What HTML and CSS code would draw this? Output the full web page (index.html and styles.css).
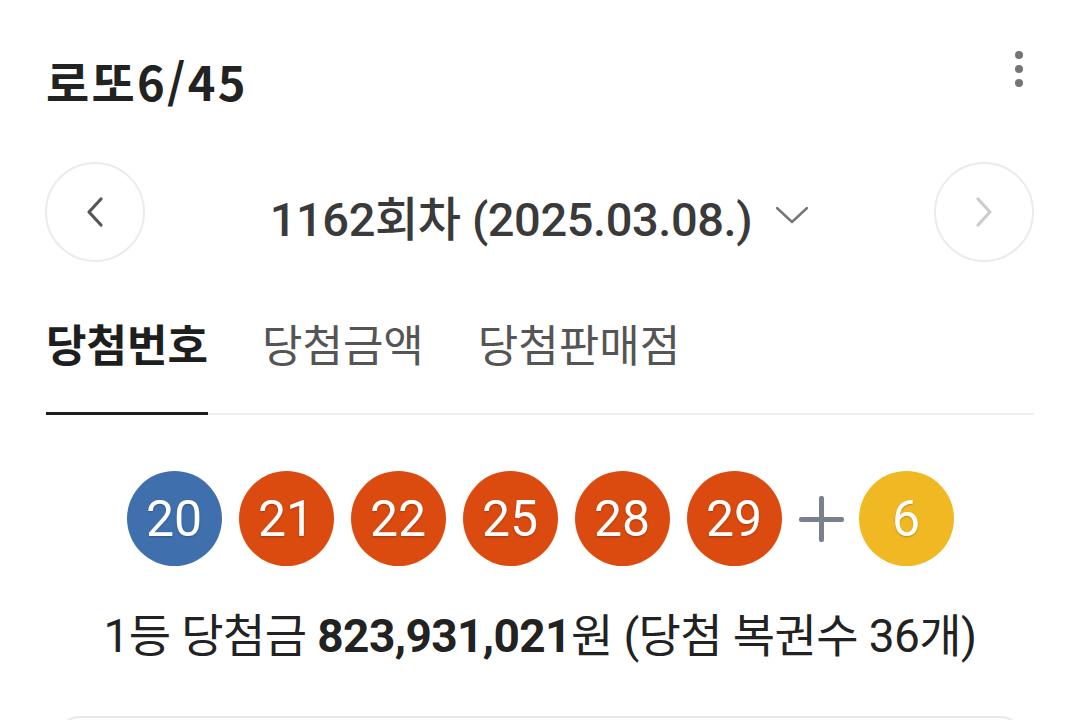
FILE: index.html
```html
<!DOCTYPE html>
<html lang="ko">
<head>
<meta charset="utf-8">
<link rel="stylesheet" href="styles.css">
</head>
<body>
<div class="page">
  <header class="header">
    <h1 class="title">로또6/45</h1>
    <button class="more" aria-label="더보기">
      <span class="dot"></span><span class="dot"></span><span class="dot"></span>
    </button>
  </header>

  <div class="nav">
    <button class="circle prev" aria-label="이전">
      <svg width="20" height="34" viewBox="0 0 20 34"><path d="M16 4 L4 17 L16 30" fill="none" stroke="#555" stroke-width="3.2" stroke-linecap="round" stroke-linejoin="round"/></svg>
    </button>
    <div class="round">
      <span class="round-text">1162회차 (2025.03.08.)</span>
      <svg class="caret" width="34" height="20" viewBox="0 0 34 20"><path d="M2 3 L17 17 L32 3" fill="none" stroke="#777" stroke-width="2.4" stroke-linecap="round" stroke-linejoin="round"/></svg>
    </div>
    <button class="circle next" aria-label="다음">
      <svg width="20" height="34" viewBox="0 0 20 34"><path d="M4 4 L16 17 L4 30" fill="none" stroke="#ccc" stroke-width="3.2" stroke-linecap="round" stroke-linejoin="round"/></svg>
    </button>
  </div>

  <nav class="tabs">
    <a class="tab active">당첨번호</a>
    <a class="tab">당첨금액</a>
    <a class="tab">당첨판매점</a>
  </nav>

  <div class="balls">
    <span class="ball blue">20</span>
    <span class="ball red">21</span>
    <span class="ball red">22</span>
    <span class="ball red">25</span>
    <span class="ball red">28</span>
    <span class="ball red">29</span>
    <span class="plus"></span>
    <span class="ball yellow">6</span>
  </div>

  <p class="prize">1등 당첨금 <b>823,931,021</b>원 (당첨 복권수 36개)</p>

  <div class="box"></div>
</div>
</body>
</html>
```

FILE: styles.css
```css
html, body {
  margin: 0;
  padding: 0;
  background: #fff;
  overflow: hidden;
}
body {
  font-family: "Roboto", "Noto Sans CJK KR", sans-serif;
  color: #222;
}
.page {
  padding: 0 46px;
  height: 720px;
  box-sizing: border-box;
  overflow: hidden;
}
.header {
  display: flex;
  align-items: center;
  justify-content: space-between;
  height: 60px;
  padding-top: 51px;
}
.title {
  margin: 0;
  font-family: "Noto Sans CJK KR", sans-serif;
  font-size: 47px;
  font-weight: 700;
  color: #222;
  letter-spacing: 2.3px;
  line-height: 60px;
}
.more {
  border: 0;
  background: none;
  padding: 0;
  display: flex;
  flex-direction: column;
  gap: 6px;
  margin-right: 11px;
  margin-top: -24px;
  width: 8px;
}
.dot {
  width: 8px;
  height: 8px;
  border-radius: 50%;
  background: #757575;
}
.nav {
  display: flex;
  align-items: center;
  margin-top: 51px;
  margin-left: -1px;
}
.circle {
  flex: none;
  width: 100px;
  height: 100px;
  border-radius: 50%;
  border: 2px solid #ebebeb;
  background: #fff;
  display: flex;
  align-items: center;
  justify-content: center;
  padding: 0;
}
.round {
  flex: 1;
  display: flex;
  align-items: center;
  justify-content: center;
  gap: 23px;
  padding-top: 6px;
}
.round-text {
  font-family: "Roboto", "Noto Sans CJK KR", sans-serif;
  font-size: 47px;
  font-weight: 500;
  color: #3a3a3a;
  letter-spacing: -0.4px;
}
.tabs {
  display: flex;
  gap: 54px;
  margin-top: 53px;
  border-bottom: 2px solid #eeeeee;
}
.tab {
  font-family: "Noto Sans CJK KR", sans-serif;
  font-size: 44px;
  line-height: 56px;
  color: #555;
  padding-bottom: 41px;
  margin-bottom: -2px;
  border-bottom: 3px solid transparent;
}
.tab.active {
  color: #1e1e1e;
  font-weight: 700;
  border-bottom-color: #1e1e1e;
}
.balls {
  display: flex;
  justify-content: center;
  align-items: center;
  gap: 17px;
  margin-top: 56px;
}
.ball {
  width: 95px;
  height: 95px;
  border-radius: 50%;
  display: flex;
  align-items: center;
  justify-content: center;
  color: #fff;
  font-family: "Roboto", sans-serif;
  font-size: 50px;
  text-shadow: 0 1px 2px rgba(0,0,0,0.25);
}
.blue { background: #3f70ad; }
.red { background: #db4a0e; }
.yellow { background: #f0b923; }
.plus {
  position: relative;
  width: 45px;
  height: 46px;
  margin: 0 -2px 0 0;
}
.plus::before, .plus::after {
  content: "";
  position: absolute;
  background: #7b818c;
  border-radius: 2px;
}
.plus::before {
  left: 0; right: 0; top: 21px; height: 5px;
}
.plus::after {
  top: 0; bottom: 0; left: 20px; width: 5px;
}
.prize {
  margin: 42px 0 0;
  text-align: center;
  font-family: "Roboto", "Noto Sans CJK KR", sans-serif;
  font-size: 46px;
  line-height: 56px;
  letter-spacing: -0.6px;
  color: #222;
  white-space: nowrap;
}
.prize b { font-weight: 700; }
.box {
  margin: 52px 10px 0;
  height: 100px;
  border: 2px solid #e8e8e8;
  border-radius: 24px;
}
```
